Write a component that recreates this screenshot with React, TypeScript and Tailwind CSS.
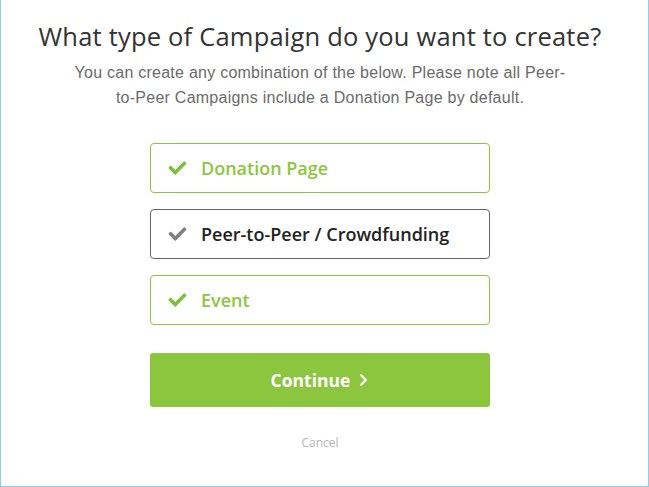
import { FaCheck, FaChevronRight } from 'react-icons/fa';

interface OptionProps {
  label: string;
  selected: boolean;
}

function Option({ label, selected }: OptionProps) {
  return (
    <button
      type="button"
      className={
        selected
          ? 'flex h-[50px] w-full items-center rounded border border-[#8dc63f] bg-white pl-[17px] text-left'
          : 'flex h-[50px] w-full items-center rounded border border-[#666] bg-white pl-[17px] text-left'
      }
    >
      <FaCheck
        className={selected ? 'h-[18px] w-[19px] text-[#7dc03a]' : 'h-[18px] w-[19px] text-[#808080]'}
      />
      <span
        className={
          selected
            ? 'ml-[14px] text-[18px] font-semibold text-[#8dc63f]'
            : 'ml-[14px] text-[18px] font-semibold text-[#222]'
        }
      >
        {label}
      </span>
    </button>
  );
}

export default function App() {
  return (
    <div className="h-[487px] w-[649px] border-x border-b border-[#8fcfe6] bg-white pr-[9px] font-['Open_Sans',sans-serif]">
      <div className="flex flex-col items-center pt-[18px]">
        <h1 className="text-[25.5px] leading-[36px] tracking-[0.2px] text-[#333]">
          What type of Campaign do you want to create?
        </h1>
        <p className="mt-[6px] text-center font-['Liberation_Sans',sans-serif] text-[16px] leading-[25px] tracking-[0.25px] text-[#6b6b6b]">
          You can create any combination of the below. Please note all Peer-
          <br />
          to-Peer Campaigns include a Donation Page by default.
        </p>
        <div className="mt-[33px] flex w-[340px] flex-col gap-4">
          <Option label="Donation Page" selected />
          <Option label="Peer-to-Peer / Crowdfunding" selected={false} />
          <Option label="Event" selected />
        </div>
        <button
          type="button"
          className="mt-7 flex h-[54px] w-[340px] items-center justify-center gap-2 rounded-[3px] bg-[#8cc63f] text-[17.5px] font-bold text-white"
        >
          Continue
          <FaChevronRight className="h-[14px] w-[11px]" />
        </button>
        <button type="button" className="mt-[27px] text-[12px] text-[#b5b5b5]">
          Cancel
        </button>
      </div>
    </div>
  );
}
